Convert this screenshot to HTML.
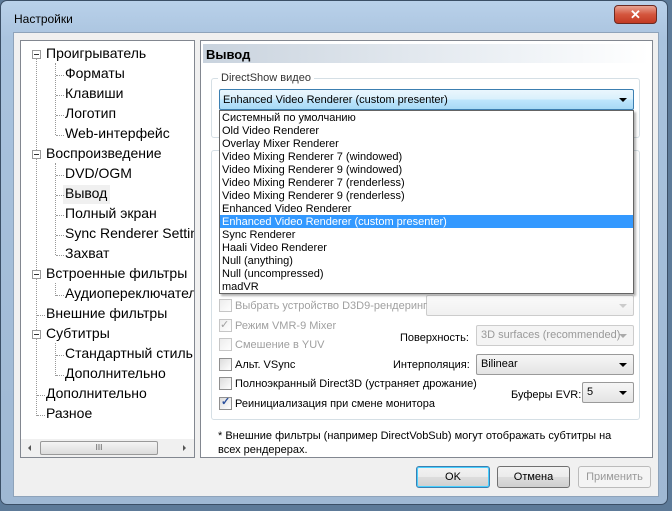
<!DOCTYPE html><html><head><meta charset="utf-8"><style>
*{box-sizing:border-box;margin:0;padding:0}
body{width:672px;height:511px;overflow:hidden;background:#5d7a98;font-family:"Liberation Sans",sans-serif;position:relative}
.a{position:absolute}
.frame{left:0;top:0;width:668px;height:505px;border-radius:7px;background:linear-gradient(180deg,#b9d1ea 0,#a9c3de 40px,#9fb8d3 100%);border:1px solid #3b4f66}
.client{left:13px;top:32px;width:646px;height:465px;background:#f0f0f0;border:1px solid #8ea3ba}
.t{font-size:14px;color:#000;white-space:nowrap}
.s{font-size:11px;color:#000;white-space:nowrap}
.g{color:#a0a0a0}
.cb{width:13px;height:13px;border:1px solid #8f8f8f;background:linear-gradient(135deg,#dcdcdc,#fff)}
.btn{height:22px;border:1px solid #707070;border-radius:3px;background:linear-gradient(#f2f2f2,#ebebeb 50%,#dddddd 51%,#cfcfcf);font-size:11px;text-align:center;line-height:20px}
.dd{border:1px solid #9a9a9a;border-radius:2px;background:linear-gradient(#f6f6f6,#e4e4e4);font-size:11px;padding-left:4px;line-height:19px;height:20px}
.arr{position:absolute;right:6px;top:8px;width:0;height:0;border-left:4px solid transparent;border-right:4px solid transparent;border-top:4px solid #000}
.dot{border-left:1px dotted #999}
.hdot{border-top:1px dotted #999;height:0}
.plus{width:9px;height:9px;border:1px solid #999;background:#fff}
.plus:after{content:"";position:absolute;left:1px;top:3px;width:5px;height:1px;background:#333}
</style></head><body>
<div class="a frame"></div>
<div class="a s" style="left:14px;top:12px;font-size:12px">Настройки</div>
<div class="a" style="left:614px;top:5px;width:43px;height:19px;border-radius:4px;border:1px solid #6b2a22;background:linear-gradient(#e8a493,#d4553d 50%,#c23a23);color:#fff;font-weight:bold;text-align:center;font-size:13px;line-height:17px">✕</div>
<div class="a client"></div>
<!-- tree -->
<div class="a" style="left:20px;top:40px;width:175px;height:418px;background:#fff;border:1px solid #828790"></div>
<div class="a dot" style="left:36px;top:59px;height:357px"></div>
<div class="a dot" style="left:55px;top:63px;height:72px"></div>
<div class="a dot" style="left:55px;top:163px;height:92px"></div>
<div class="a dot" style="left:55px;top:283px;height:13px"></div>
<div class="a dot" style="left:55px;top:343px;height:33px"></div>
<div class="a plus" style="left:32px;top:50px"></div>
<div class="a plus" style="left:32px;top:150px"></div>
<div class="a plus" style="left:32px;top:270px"></div>
<div class="a plus" style="left:32px;top:330px"></div>
<div class="a t" style="left:46px;top:45px">Проигрыватель</div>
<div class="a hdot" style="left:56px;top:75px;width:8px"></div><div class="a t" style="left:65px;top:65px">Форматы</div>
<div class="a hdot" style="left:56px;top:95px;width:8px"></div><div class="a t" style="left:65px;top:85px">Клавиши</div>
<div class="a hdot" style="left:56px;top:115px;width:8px"></div><div class="a t" style="left:65px;top:105px">Логотип</div>
<div class="a hdot" style="left:56px;top:135px;width:8px"></div><div class="a t" style="left:65px;top:125px">Web-интерфейс</div>
<div class="a t" style="left:46px;top:145px">Воспроизведение</div>
<div class="a hdot" style="left:56px;top:175px;width:8px"></div><div class="a t" style="left:65px;top:165px">DVD/OGM</div>
<div class="a" style="left:63px;top:185px;width:47px;height:19px;background:#f0f0f0"></div>
<div class="a hdot" style="left:56px;top:195px;width:8px"></div><div class="a t" style="left:65px;top:185px">Вывод</div>
<div class="a hdot" style="left:56px;top:215px;width:8px"></div><div class="a t" style="left:65px;top:205px">Полный экран</div>
<div class="a hdot" style="left:56px;top:235px;width:8px"></div><div class="a t" style="left:65px;top:225px;width:129px;overflow:hidden">Sync Renderer Settings</div>
<div class="a hdot" style="left:56px;top:255px;width:8px"></div><div class="a t" style="left:65px;top:245px">Захват</div>
<div class="a t" style="left:46px;top:265px;width:148px;overflow:hidden">Встроенные фильтры</div>
<div class="a hdot" style="left:56px;top:295px;width:8px"></div><div class="a t" style="left:65px;top:285px;width:129px;overflow:hidden">Аудиопереключатель</div>
<div class="a hdot" style="left:37px;top:315px;width:8px"></div><div class="a t" style="left:46px;top:305px">Внешние фильтры</div>
<div class="a t" style="left:46px;top:325px">Субтитры</div>
<div class="a hdot" style="left:56px;top:355px;width:8px"></div><div class="a t" style="left:65px;top:345px;width:129px;overflow:hidden">Стандартный стиль</div>
<div class="a hdot" style="left:56px;top:375px;width:8px"></div><div class="a t" style="left:65px;top:365px">Дополнительно</div>
<div class="a hdot" style="left:37px;top:395px;width:8px"></div><div class="a t" style="left:46px;top:385px">Дополнительно</div>
<div class="a hdot" style="left:37px;top:415px;width:8px"></div><div class="a t" style="left:46px;top:405px">Разное</div>
<div class="a" style="left:21px;top:439px;width:173px;height:18px;background:#f0f0f0"></div>
<div class="a" style="left:40px;top:441px;width:118px;height:14px;border:1px solid #999;border-radius:2px;background:linear-gradient(#f4f4f4,#dcdcdc);font-size:8px;text-align:center;line-height:12px;color:#555">III</div>
<div class="a" style="left:28px;top:445px;border-top:3px solid transparent;border-bottom:3px solid transparent;border-right:3px solid #555"></div>
<div class="a" style="left:183px;top:445px;border-top:3px solid transparent;border-bottom:3px solid transparent;border-left:3px solid #555"></div>
<!-- right -->
<div class="a" style="left:200px;top:40px;width:453px;height:418px;border:1px solid #828790;background:#fff"></div>
<div class="a" style="left:203px;top:44px;width:446px;height:19px;background:linear-gradient(90deg,#c9d3de,#eef2f6 70%,#fff)"></div>
<div class="a s" style="left:206px;top:47px;font-size:13px;font-weight:bold">Вывод</div>
<div class="a" style="left:211px;top:78px;width:429px;height:60px;border:1px solid #d5dfe5;border-radius:3px"></div>
<div class="a" style="left:211px;top:150px;width:429px;height:270px;border:1px solid #d5dfe5;border-radius:3px"></div>
<div class="a s" style="left:218px;top:72px;background:#fff;padding:0 3px;color:#333">DirectShow видео</div>
<div class="a" style="left:219px;top:89px;width:415px;height:21px;border:1px solid #3c7fb1;border-radius:2px;background:linear-gradient(#eaf6fd,#d9f0fc 50%,#bee6fd 51%,#a7d9f5)"></div>
<div class="a s" style="left:223px;top:94px">Enhanced Video Renderer (custom presenter)</div>
<div class="a arr" style="left:619px;top:98px;right:auto"></div>
<div class="a" style="left:219px;top:110px;width:415px;height:184px;background:#fff;border:1px solid #646464;box-shadow:2px 2px 2px rgba(0,0,0,.3)"></div>
<div class="a" style="left:220px;top:215px;width:413px;height:13px;background:#3399ff"></div>
<div class="a s" style="left:222px;top:112px;line-height:13px">Системный по умолчанию<br>Old Video Renderer<br>Overlay Mixer Renderer<br>Video Mixing Renderer 7 (windowed)<br>Video Mixing Renderer 9 (windowed)<br>Video Mixing Renderer 7 (renderless)<br>Video Mixing Renderer 9 (renderless)<br>Enhanced Video Renderer<br><span style="color:#fff">Enhanced Video Renderer (custom presenter)</span><br>Sync Renderer<br>Haali Video Renderer<br>Null (anything)<br>Null (uncompressed)<br>madVR</div>
<!-- options -->
<div class="a cb" style="left:219px;top:299px;opacity:.5"></div><div class="a s g" style="left:235px;top:300px">Выбрать устройство D3D9-рендеринг</div>
<div class="a dd" style="left:426px;top:295px;width:208px;height:21px;opacity:.5"><span class="arr" style="border-top-color:#999"></span></div>
<div class="a cb" style="left:219px;top:319px;opacity:.5"></div><div class="a s g" style="left:220px;top:318px">✓</div><div class="a s g" style="left:235px;top:320px">Режим VMR-9 Mixer</div>
<div class="a cb" style="left:219px;top:338px;opacity:.5"></div><div class="a s g" style="left:235px;top:339px">Смешение в YUV</div>
<div class="a s" style="left:400px;top:332px">Поверхность:</div>
<div class="a dd" style="left:476px;top:325px;width:158px;height:21px;color:#999;background:#f4f4f4;border-color:#ccc">3D surfaces (recommended)<span class="arr" style="border-top-color:#aaa"></span></div>
<div class="a cb" style="left:219px;top:358px"></div><div class="a s" style="left:235px;top:359px">Альт. VSync</div>
<div class="a s" style="left:393px;top:359px">Интерполяция:</div>
<div class="a dd" style="left:476px;top:354px;width:158px;height:21px">Bilinear<span class="arr"></span></div>
<div class="a cb" style="left:219px;top:377px"></div><div class="a s" style="left:235px;top:378px">Полноэкранный Direct3D (устраняет дрожание)</div>
<div class="a s" style="left:511px;top:389px">Буферы EVR:</div>
<div class="a dd" style="left:582px;top:382px;width:52px;height:21px">5<span class="arr"></span></div>
<div class="a cb" style="left:219px;top:397px"></div><div class="a s" style="left:221px;top:395px;color:#2a4f9c;font-weight:bold">✓</div><div class="a s" style="left:235px;top:398px">Реинициализация при смене монитора</div>
<div class="a s" style="left:218px;top:429px;line-height:14px">* Внешние фильтры (например DirectVobSub) могут отображать субтитры на<br>всех рендерерах.</div>
<!-- buttons -->
<div class="a btn" style="left:416px;top:466px;width:74px;border-color:#3c7fb1;box-shadow:inset 0 0 0 1px #48d0ff">OK</div>
<div class="a btn" style="left:497px;top:466px;width:73px">Отмена</div>
<div class="a btn" style="left:578px;top:466px;width:73px;color:#999;border-color:#bbb;background:#f4f4f4">Применить</div>
</body></html>
